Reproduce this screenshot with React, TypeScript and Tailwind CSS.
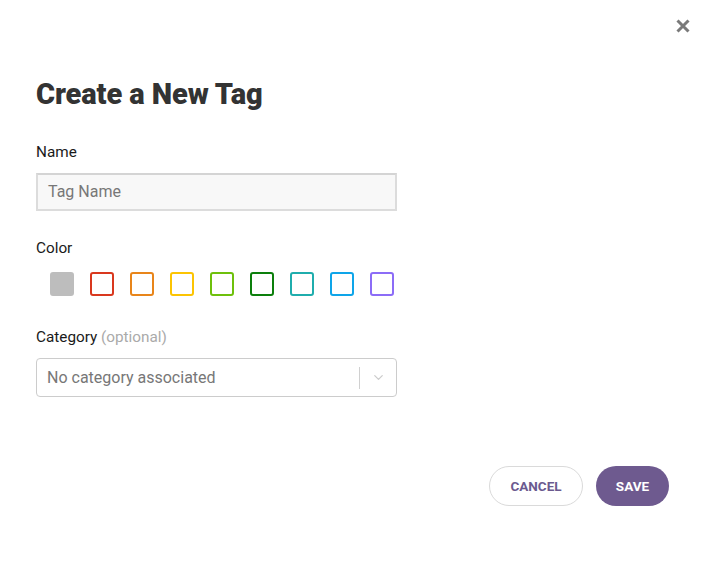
import { ChevronDown } from "lucide-react";

const swatches = [
  { border: "border-[#bdbdbd]", fill: "bg-[#bdbdbd]" },
  { border: "border-[#d9381e]", fill: "bg-white" },
  { border: "border-[#e8851a]", fill: "bg-white" },
  { border: "border-[#fcc403]", fill: "bg-white" },
  { border: "border-[#6ec00c]", fill: "bg-white" },
  { border: "border-[#0c7f0c]", fill: "bg-white" },
  { border: "border-[#1fadad]", fill: "bg-white" },
  { border: "border-[#0ea5e9]", fill: "bg-white" },
  { border: "border-[#8c6cf7]", fill: "bg-white" },
];

export default function App() {
  return (
    <div className="relative w-full min-h-[563px] bg-white px-9 font-['Roboto',sans-serif] text-[#222]">
      {/* close */}
      <button className="absolute right-[21px] top-[19px] h-[14px] w-[14px] text-[#7a7a7a]">
        <svg viewBox="0 0 14 14" className="h-[14px] w-[14px]">
          <path d="M1.5 1.5 L12.5 12.5 M12.5 1.5 L1.5 12.5" stroke="currentColor" strokeWidth="3" strokeLinecap="butt" />
        </svg>
      </button>

      <h1 className="pt-[77px] text-[29px] leading-[34px] font-black tracking-[-0.1px] text-[#333]">
        Create a New Tag
      </h1>

      <div className="w-[361px]">
        <label className="mt-[31px] block text-[15.3px] leading-5 text-[#1a1a1a]">Name</label>
        <div className="mt-[11px] h-[38px] border-2 border-[#dcdcdc] border-t-[#d4d4d4] bg-[#f8f8f8] flex items-center px-[10px]">
          <span className="text-[16px] text-[#777]">Tag Name</span>
        </div>

        <label className="mt-[27px] block text-[15.3px] leading-5 text-[#1a1a1a]">Color</label>
        <div className="mt-[14px] flex gap-[16px] pl-[14px]">
          {swatches.map((s, i) => (
            <div key={i} className={`h-[24px] w-[24px] rounded-[3px] border-2 ${s.border} ${s.fill}`} />
          ))}
        </div>

        <label className="mt-[31px] block text-[15.3px] leading-5 text-[#1a1a1a]">
          Category <span className="text-[#aaa]">(optional)</span>
        </label>
        <div className="mt-[11px] h-[39px] rounded-[4px] border border-[#cccccc] flex items-center pl-[10px]">
          <span className="flex-1 text-[16px] text-[#777]">No category associated</span>
          <div className="h-[22px] w-px bg-[#d0d0d0]" />
          <div className="w-[36px] flex justify-center">
            <ChevronDown className="h-[15px] w-[15px] text-[#cccccc]" strokeWidth={2} />
          </div>
        </div>
      </div>

      <div className="mt-[69px] flex justify-end gap-[13px] pr-[6px]">
        <button className="h-[40px] w-[94px] rounded-full border border-[#dadada] bg-white text-[13.5px] font-bold text-[#6b5a8f]">
          CANCEL
        </button>
        <button className="h-[40px] w-[73px] rounded-full bg-[#6e5a8f] text-[13.5px] font-bold text-white">
          SAVE
        </button>
      </div>
    </div>
  );
}
